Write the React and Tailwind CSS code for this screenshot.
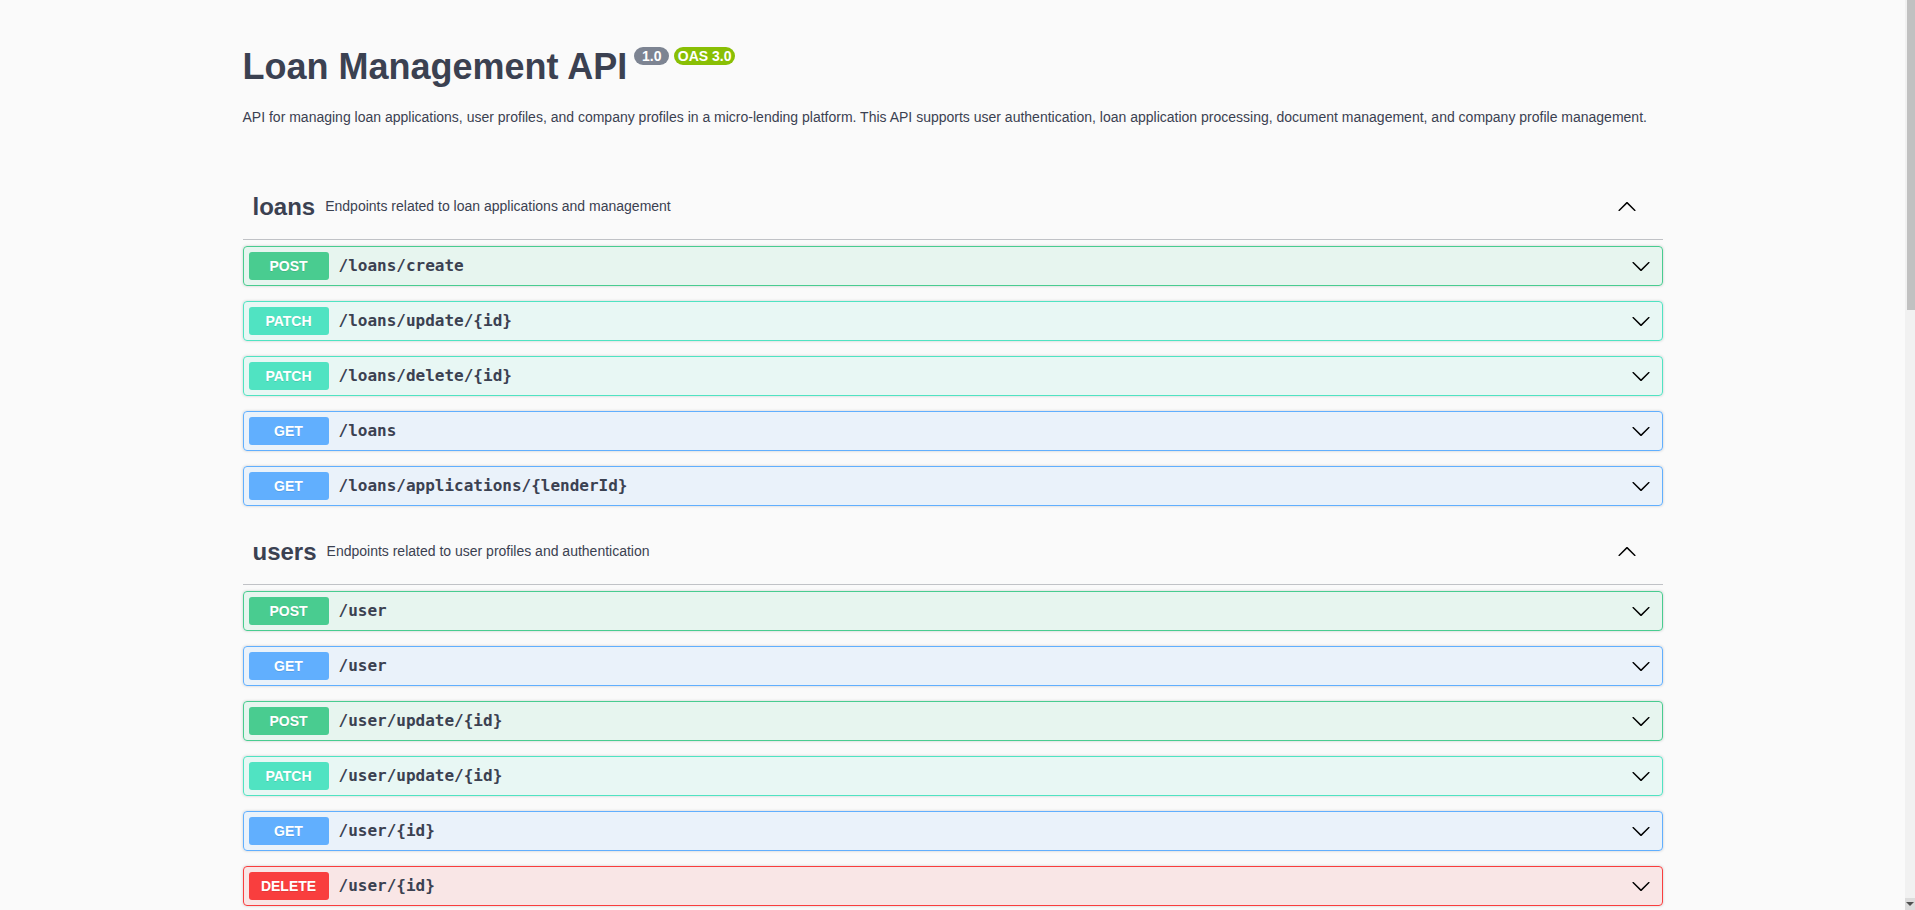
const sections = [
  {
    name: 'loans',
    description: 'Endpoints related to loan applications and management',
    ops: [
      { method: 'POST', path: '/loans/create' },
      { method: 'PATCH', path: '/loans/update/{id}' },
      { method: 'PATCH', path: '/loans/delete/{id}' },
      { method: 'GET', path: '/loans' },
      { method: 'GET', path: '/loans/applications/{lenderId}' },
    ],
  },
  {
    name: 'users',
    description: 'Endpoints related to user profiles and authentication',
    ops: [
      { method: 'POST', path: '/user' },
      { method: 'GET', path: '/user' },
      { method: 'POST', path: '/user/update/{id}' },
      { method: 'PATCH', path: '/user/update/{id}' },
      { method: 'GET', path: '/user/{id}' },
      { method: 'DELETE', path: '/user/{id}' },
    ],
  },
];

const methodStyles = {
  POST: { row: 'border-[#49cc90] bg-[rgba(73,204,144,0.1)]', badge: 'bg-[#49cc90]' },
  PATCH: { row: 'border-[#50e3c2] bg-[rgba(80,227,194,0.1)]', badge: 'bg-[#50e3c2]' },
  GET: { row: 'border-[#61affe] bg-[rgba(97,175,254,0.1)]', badge: 'bg-[#61affe]' },
  DELETE: { row: 'border-[#f93e3e] bg-[rgba(249,62,62,0.1)]', badge: 'bg-[#f93e3e]' },
};

function Arrow({ up = false }) {
  return (
    <svg
      viewBox="0 0 20 20"
      width="20"
      height="20"
      className={up ? 'rotate-180 fill-black' : 'fill-black'}
      aria-hidden="true"
    >
      <path d="M17.418 6.109c.272-.268.709-.268.979 0s.271.701 0 .969l-7.908 7.83c-.27.268-.707.268-.979 0l-7.908-7.83c-.27-.268-.27-.701 0-.969.271-.268.709-.268.979 0L10 13.25l7.418-7.141z" />
    </svg>
  );
}

function Operation({ method, path }) {
  const s = methodStyles[method];
  return (
    <div
      className={`mb-[15px] flex h-[40px] items-center rounded-[4px] border pl-[5px] pr-[11px] shadow-[0_0_3px_rgba(0,0,0,0.19)] ${s.row}`}
    >
      <span
        className={`flex h-[28px] w-[80px] items-center justify-center rounded-[3px] text-[14px] font-bold text-white [text-shadow:0_1px_0_rgba(0,0,0,0.1)] ${s.badge}`}
      >
        {method}
      </span>
      <span className="flex-1 px-[10px] font-['DejaVu_Sans_Mono',monospace] text-[16px] font-bold text-[#3b4151]">
        {path}
      </span>
      <Arrow />
    </div>
  );
}

function TagSection({ name, description, ops }) {
  return (
    <div>
      <h3 className="mb-[6px] flex h-[64px] items-center border-b border-[rgba(59,65,81,0.3)] pb-[2px] pl-[10px] pr-[26px] text-[#3b4151]">
        <span className="text-[24px] font-bold">{name}</span>
        <small className="flex-1 px-[10px] text-[14px] font-normal">{description}</small>
        <Arrow up />
      </h3>
      {ops.map((op, i) => (
        <Operation key={i} {...op} />
      ))}
    </div>
  );
}

export default function App() {
  return (
    <div className="flex h-[910px] w-full overflow-hidden bg-[#fafafa] font-['Liberation_Sans',Arial,sans-serif] text-[#3b4151]">
      <main className="flex-1 overflow-hidden">
        <div className="mx-auto max-w-[1460px] px-5 pt-[47px]">
          <div className="flex h-[40px] items-start">
            <h2 className="text-[36px] font-bold leading-[40px]">Loan Management API</h2>
            <span className="ml-[7px] flex h-[18px] w-[35px] items-center justify-center rounded-full bg-[#7d8492] text-[14px] font-bold text-white">
              1.0
            </span>
            <span className="ml-[5px] flex h-[18px] w-[61px] items-center justify-center rounded-full bg-[#89bf04] text-[14px] font-bold text-white">
              OAS 3.0
            </span>
          </div>
          <p className="mt-[20px] text-[14px] leading-[20px]">
            API for managing loan applications, user profiles, and company profiles in a micro-lending platform. This API supports user authentication, loan application processing, document management, and company profile management.
          </p>
          <div className="mt-[49px]">
            {sections.map((s) => (
              <TagSection key={s.name} {...s} />
            ))}
          </div>
        </div>
      </main>
      <div className="flex w-[10px] flex-col bg-[#f1f1f1]">
        <div className="ml-[2px] h-[310px] w-[8px] bg-[#c1c1c1]" />
        <div className="flex-1" />
        <div className="flex h-[12px] items-center justify-center bg-[#dcdcdc]">
          <div className="h-0 w-0 border-x-[4px] border-t-[4px] border-x-transparent border-t-[#505050]" />
        </div>
      </div>
    </div>
  );
}
